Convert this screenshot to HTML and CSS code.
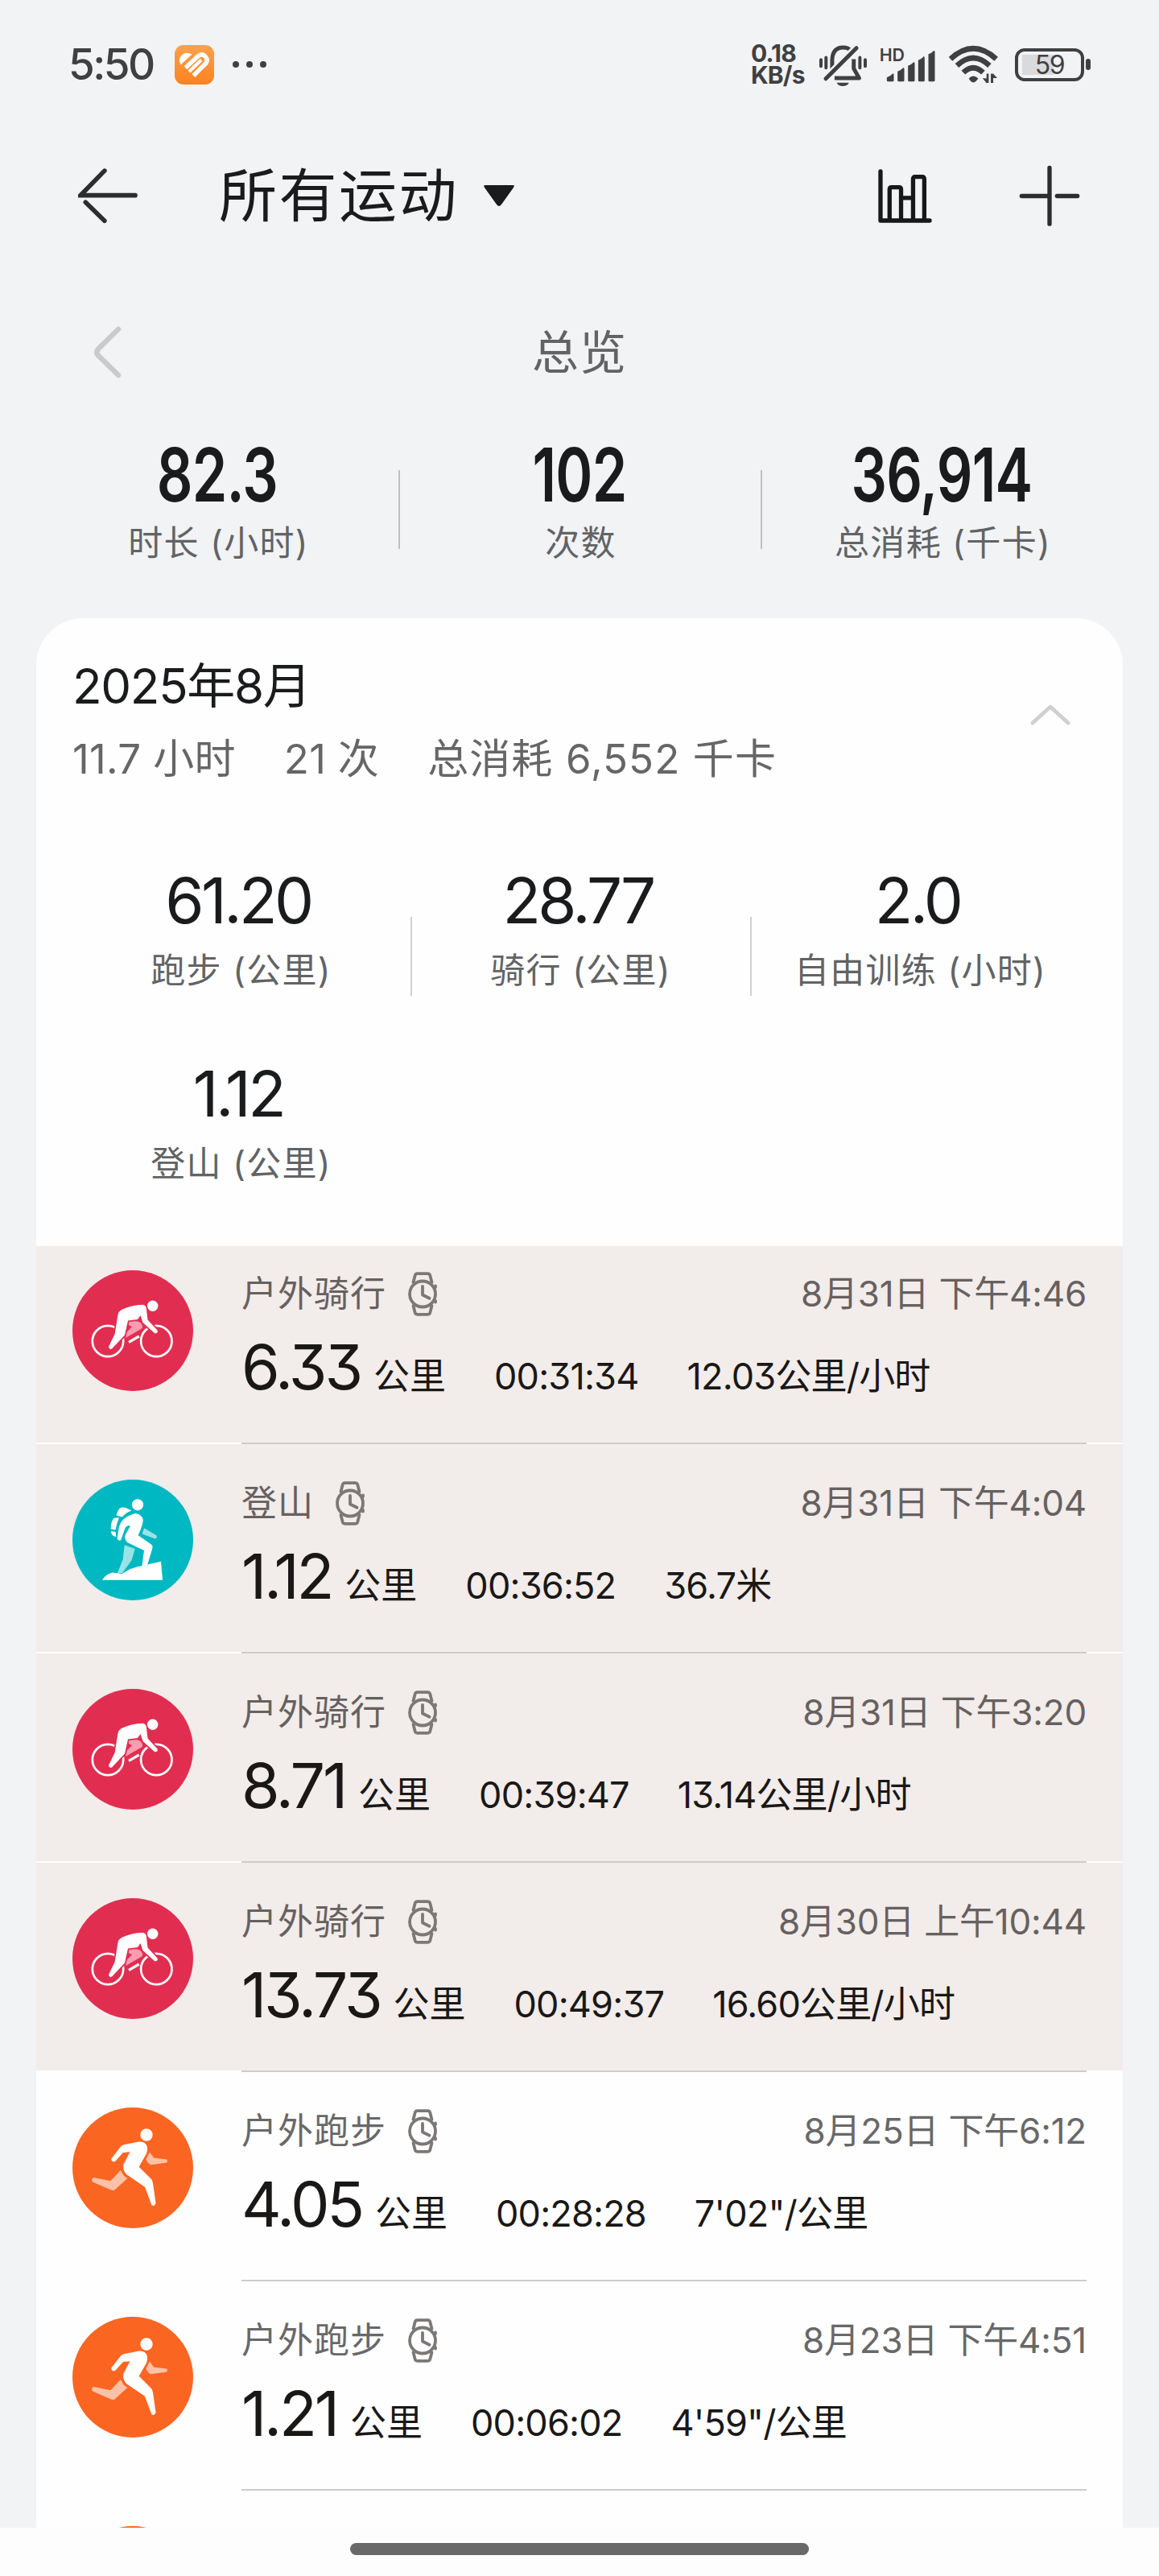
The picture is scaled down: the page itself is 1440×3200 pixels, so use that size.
FILE: index.html
```html
<!DOCTYPE html>
<html lang="zh-CN">
<head>
<meta charset="utf-8">
<title>所有运动</title>
<link rel="stylesheet" href="styles.css">
</head>
<body>
<svg class="sprite" aria-hidden="true">
  <symbol id="watch" viewBox="0 0 37 55">
    <g fill="none" stroke="currentColor" stroke-width="3.8" stroke-linecap="round" stroke-linejoin="round">
      <circle cx="18" cy="27.5" r="16"/>
      <path d="M6.5 13 8.6 4.6Q9.2 2.2 11.5 2.2H24.5Q26.8 2.2 27.4 4.6L29.5 13M6.5 42 8.6 50.4Q9.2 52.8 11.5 52.8H24.5Q26.8 52.8 27.4 50.4L29.5 42"/>
      <path d="M18 18V28.5L26.5 32.8"/>
      <path d="M34 17.5V19M34 36V37.5"/>
    </g>
  </symbol>
  <symbol id="ride" viewBox="0 0 150 150">
    <circle cx="75" cy="75" r="75" fill="#e12e50"/>
    <g fill="none" stroke="#fff" stroke-width="2.7">
      <circle cx="44" cy="88" r="19.2"/>
      <circle cx="104.3" cy="88" r="19.2"/>
    </g>
    <path d="M70 63.700Q80 62 84.500 65Q89 70 86 72.500L66 84 67.300 77 74 70.300 68.300 67Z" fill="#fb9cb1"/>
    <path d="M70 89.300 82.700 82" stroke="#fff" stroke-width="3.2" fill="none"/>
    <path d="M61 49Q73 43 87.500 42.700Q92 43.500 92 49L93.500 61.500 105.500 74.500Q107 78 102.500 78.500L87.500 65 84.500 56 81 61 69 62.500 65 80.500 49 97.500Q45.500 99 45 95L52.700 79 56.500 55Q57.500 51 61 49Z" fill="#fff" stroke="#e12e50" stroke-width="3.6" paint-order="stroke"/>
    <circle cx="99.7" cy="44.3" r="6.7" fill="#fff"/>
  </symbol>
  <symbol id="hike" viewBox="0 0 150 150">
    <circle cx="75" cy="75" r="75" fill="#00b8c1"/>
    <circle cx="81" cy="31.3" r="7.1" fill="#fff"/>
    <path d="M54.500 44.500Q57 36 59.500 35.300 63 34 66 35L73.500 38.500Q66 41 62 46.500ZM51.500 47.800 58 47.300Q55.500 53 53.500 62.500L47.700 61.500Q47.500 53 51.500 47.800ZM48 64 53.500 65 54.500 71.300Q48 70 48 64Z" fill="#fff"/>
    <path d="M89 60.300 104 69Q106.500 72 102.500 73.500L86.700 67.500ZM64.700 81.300 77.700 86 73.500 100.300 62 116H56L62.700 99Z" fill="#99e3e7"/>
    <path d="M36.700 124.700Q43 116.500 50 115.500L61.700 117Q73 109 86.700 107L110 101.800 112 124.700Z" fill="#fff"/>
    <path d="M78 42Q86 43 87.700 49.500 88.500 54 81.700 69.300L98 80.500Q100 82 99.300 85.500L92.700 107.500 86.300 108 89 88 68 78Q64 73 65.500 69L72 57.500Q67 56.500 65 61.500L60.300 75Q56.500 77 55.700 73L57.500 61Q60 46.500 78 42Z" fill="#fff"/>
  </symbol>
  <symbol id="run" viewBox="0 0 150 150">
    <circle cx="75" cy="75" r="75" fill="#fb6522"/>
    <circle cx="92" cy="34" r="7.7" fill="#fff"/>
    <path d="M96 55.500 101 62.500 117 64.500Q119 67 117 68.500L97.500 71.300Q92.500 69 91.500 64ZM59.800 78 63.500 84.500 68.300 88 53 102Q50.500 104 47.500 102.300L25 92.500Q22.500 88 26.500 87L47.300 91.300Z" fill="#fdc1a7"/>
    <path d="M60.500 48Q62 46.500 65 46L82.500 42.500Q91 41.500 93 49 93.500 55 91 59L82.700 73.700 98 89Q99.500 91 100 94L103.500 118.500Q102.500 123 98.500 121.500L90 98.700 67 83Q62 78 63.500 70.500L71.500 55.200 63 56 53 67Q48.500 68.500 48.300 63.500Z" fill="#fff"/>
  </symbol>
</svg>

<div class="screen">
  <div class="scroll">
    <header class="status">
      <span class="clock">5:50</span>
      <svg class="app-badge" viewBox="0 0 49 49">
        <defs><linearGradient id="og" x1="0" y1="0" x2="0" y2="1"><stop offset="0" stop-color="#fda04c"/><stop offset="1" stop-color="#fc8320"/></linearGradient></defs>
        <rect width="49" height="49" rx="11" fill="url(#og)"/>
        <path d="M7.500 24.500Q4 18 8 13.500Q13.500 7 21.500 11.500Z" fill="#fff"/>
        <path d="M13.500 28.300 29 13.800Q33.500 10 38 14Q42 18.500 38.500 23L23.300 38" fill="none" stroke="#fff" stroke-width="5.5"/>
        <path d="M18 33 33 18.500" fill="none" stroke="#fff" stroke-width="4.2"/>
      </svg>
      <svg class="more" viewBox="0 0 42 8" fill="#3f4042"><circle cx="4" cy="4" r="4"/><circle cx="21" cy="4" r="4"/><circle cx="38" cy="4" r="4"/></svg>
      <span class="net"><span>0.18</span><span>KB/s</span></span>
      <svg class="bell" viewBox="348 72 184 160" fill="none" stroke="#3f4042">
        <path d="M357 130V154M376 122V160M503 122V160M523 130V154" stroke-width="12" stroke-linecap="round"/>
        <path d="M399 165V128Q402 84 440 84 460 84 470 97" stroke-width="15"/>
        <path d="M480 128V163L500 199H408" stroke-width="15" stroke-linejoin="round"/>
        <path d="M375 201 490 86" stroke="#f1f3f5" stroke-width="30"/>
        <path d="M375 201 490 86" stroke-width="15" stroke-linecap="round"/>
        <path d="M416 216H462Q455 229 439 229T416 216Z" fill="#3f4042" stroke="none"/>
      </svg>
      <svg class="signal" viewBox="572 56 209 183">
        <text class="hd" x="574" y="133">HD</text>
        <path d="M601 195Q614 190 624 180 627 180 627 184V206Q627 210 622 210H606Q601 210 601 206ZM641 172Q654 168 662 159 666 159 666 163V206Q666 210 661 210H646Q641 210 641 206ZM680 151Q693 147 701 138 705 138 705 142V206Q705 210 700 210H685Q680 210 680 206ZM718 130Q731 126 738 117 742 117 742 121V206Q742 210 737 210H723Q718 210 718 206ZM756 108Q768 104 776 95 780 95 780 99V206Q780 210 775 210H761Q756 210 756 206Z" fill="#3f4042"/>
      </svg>
      <svg class="wifi" viewBox="830 80 190 146" fill="none" stroke="#3f4042">
        <path d="M839 131Q924 53 1010 131M863 156Q924 99 985 156M887 182Q924 146 961 182" stroke-width="20"/>
        <path d="M907 204Q924 186 943 204L934 215Q925 223 915 215Z" fill="#3f4042" stroke="none"/>
        <path d="M959 203 973 221H982V186H974V204ZM990 221V186H999L1014 203H999V221Z" fill="#3f4042" stroke="none"/>
      </svg>
      <span class="battery"><span class="cell">59</span><span class="tip"></span></span>
    </header>

    <nav class="topbar">
      <svg class="back" viewBox="112 534 226 210" fill="none" stroke="#2c2d2f" stroke-width="17" stroke-linecap="round"><path d="M211 546 121 638H326M140 664 211 733"/></svg>
      <h1>所有运动</h1>
      <svg class="caret" viewBox="0 0 40 28"><path d="M3 1H37Q40 1 38 4L23 25Q20 29 17 25L2 4Q0 1 3 1Z" fill="#1a1b1c"/></svg>
      <svg class="chart" viewBox="570 536 206 208" fill="none" stroke="#17181a" stroke-width="16" stroke-linecap="round" stroke-linejoin="round"><path d="M581 548V732H765M615 732V615Q615 607 623 607H650Q658 607 658 615V732M658 647H703M703 732V577Q703 568 711 568H737Q745 568 745 577V732"/></svg>
      <svg class="plus" viewBox="1098 524 228 230" fill="none" stroke="#2c2d2f" stroke-width="16"><path d="M1212 534V743" stroke-linecap="round"/><path d="M1108 639H1206M1240 639H1316" stroke-linecap="round"/></svg>
    </nav>

    <div class="period">
      <svg class="prev" viewBox="0 0 36 66" fill="none" stroke="#c9cacc" stroke-width="6.5" stroke-linecap="round"><path d="M31 4 6 28.500Q2.500 32.500 6 36.500L31 61"/></svg>
      <h2>总览</h2>
    </div>

    <section class="totals">
      <div class="total"><b>82.3</b><span>时长 (小时)</span></div>
      <div class="total"><b>102</b><span>次数</span></div>
      <div class="total"><b>36,914</b><span>总消耗 (千卡)</span></div>
    </section>

    <main class="card">
      <div class="month">
        <div class="month-text">
          <h3>2025年8月</h3>
          <p><span>11.7 小时</span><span>21 次</span><span>总消耗 6,552 千卡</span></p>
        </div>
        <svg class="fold" viewBox="0 0 50 26" fill="none" stroke="#d0d0d0" stroke-width="5" stroke-linecap="round" stroke-linejoin="round"><path d="M3 23 25 3 47 23"/></svg>
      </div>
      <div class="stats">
        <div class="stat"><b>61.20</b><span>跑步 (公里)</span></div>
        <div class="stat"><b>28.77</b><span>骑行 (公里)</span></div>
        <div class="stat"><b>2.0</b><span>自由训练 (小时)</span></div>
        <div class="stat"><b>1.12</b><span>登山 (公里)</span></div>
      </div>
      <ul class="list">
        <li class="row marked"><svg class="sport"><use href="#ride"/></svg><div class="info"><div class="line"><span>户外骑行</span><svg class="watch"><use href="#watch"/></svg><time>8月31日 下午4:46</time></div><div class="values"><b>6.33</b><i>公里</i><span>00:31:34</span><span>12.03公里/小时</span></div></div></li>
        <li class="rule"></li>
        <li class="row marked"><svg class="sport"><use href="#hike"/></svg><div class="info"><div class="line"><span>登山</span><svg class="watch"><use href="#watch"/></svg><time>8月31日 下午4:04</time></div><div class="values"><b>1.12</b><i>公里</i><span>00:36:52</span><span>36.7米</span></div></div></li>
        <li class="rule"></li>
        <li class="row marked"><svg class="sport"><use href="#ride"/></svg><div class="info"><div class="line"><span>户外骑行</span><svg class="watch"><use href="#watch"/></svg><time>8月31日 下午3:20</time></div><div class="values"><b>8.71</b><i>公里</i><span>00:39:47</span><span>13.14公里/小时</span></div></div></li>
        <li class="rule"></li>
        <li class="row marked"><svg class="sport"><use href="#ride"/></svg><div class="info"><div class="line"><span>户外骑行</span><svg class="watch"><use href="#watch"/></svg><time>8月30日 上午10:44</time></div><div class="values"><b>13.73</b><i>公里</i><span>00:49:37</span><span>16.60公里/小时</span></div></div></li>
        <li class="rule"></li>
        <li class="row"><svg class="sport"><use href="#run"/></svg><div class="info"><div class="line"><span>户外跑步</span><svg class="watch"><use href="#watch"/></svg><time>8月25日 下午6:12</time></div><div class="values"><b>4.05</b><i>公里</i><span>00:28:28</span><span>7'02"/公里</span></div></div></li>
        <li class="rule"></li>
        <li class="row"><svg class="sport"><use href="#run"/></svg><div class="info"><div class="line"><span>户外跑步</span><svg class="watch"><use href="#watch"/></svg><time>8月23日 下午4:51</time></div><div class="values"><b>1.21</b><i>公里</i><span>00:06:02</span><span>4'59"/公里</span></div></div></li>
        <li class="rule"></li>
        <li class="row"><svg class="sport"><use href="#run"/></svg></li>
      </ul>
    </main>
  </div>
  <footer class="home"><span class="pill"></span></footer>
</div>
</body>
</html>
```
FILE: styles.css
```css
* { box-sizing: border-box; }

body {
  margin: 0;
  background: #fdfdfd;
  color: #1a1b1c;
  font-family: Inter, "Noto Sans CJK SC", sans-serif;
}

h1, h2, h3, p, ul { margin: 0; padding: 0; font-weight: 400; }
ul { list-style: none; }
b, i { font-weight: 400; font-style: normal; }
svg { display: block; flex: none; }
.sprite { display: none; }

.screen { width: 1440px; height: 3200px; display: flex; flex-direction: column; overflow: hidden; }
.scroll { height: 3140px; flex: none; overflow: hidden; background: #f1f3f5; }

/* status bar */
.status { height: 160px; display: flex; align-items: center; padding: 0 85px 0 85px; color: #3f4042; }
.clock { width: 132px; font-size: 53px; font-weight: 500; line-height: 60px; letter-spacing: -2.5px; white-space: nowrap; }
.app-badge { width: 49px; height: 49px; margin-right: 23px; }
.more { width: 42px; height: 8px; }
.net { width: 84px; margin-left: auto; display: flex; flex-direction: column; font-size: 30px; font-weight: 700; line-height: 27px; letter-spacing: -0.8px; }
.bell { width: 61px; height: 53px; margin: 2px 14px 0 0; }
.signal { width: 70px; height: 61px; margin-right: 16px; }
.hd { font-size: 64px; font-weight: 600; fill: #3f4042; letter-spacing: -1px; }
.wifi { width: 63px; height: 49px; margin-right: 20px; }
.battery { display: flex; align-items: center; gap: 2px; }
.cell { width: 86px; height: 41px; border: 4px solid #3f4042; border-radius: 12px; background: linear-gradient(90deg, #d9dadc 57%, transparent 57%) 5px 4px / 68px 25px no-repeat; font-size: 32px; line-height: 33px; text-align: center; letter-spacing: -1.5px; }
.tip { width: 6px; height: 14px; border-radius: 3px; background: #3f4042; }

/* title bar */
.topbar { height: 166px; display: flex; align-items: center; padding: 0 98px 0 97px; }
.back { width: 75px; height: 70px; }
h1 { margin-left: 100px; font-size: 72px; line-height: 90px; letter-spacing: 2.5px; }
.caret { width: 40px; height: 28px; margin-left: 30px; }
.chart { width: 69px; height: 69px; margin-left: auto; margin-right: 107px; }
.plus { width: 76px; height: 77px; }

/* period switcher */
.period { height: 222px; display: grid; grid-template-columns: 1fr auto 1fr; align-items: center; padding: 2px 116px 0; }
.prev { width: 36px; height: 66px; }
h2 { font-size: 58px; line-height: 80px; letter-spacing: 1px; color: #626365; }

.totals { display: grid; grid-template-columns: repeat(3, 450px); margin: 0 45px 52px; }
.total, .stat { position: relative; display: flex; flex-direction: column; align-items: center; line-height: 84px; white-space: nowrap; }
.total b { font-size: 92px; font-weight: 600; transform: scaleX(0.76); letter-spacing: -1px; }
.total span, .stat span { padding-left: 3px; font-size: 43px; letter-spacing: 1.3px; color: #626365; }
.total + .total::before { content: ""; position: absolute; left: 0; top: 36px; width: 2px; height: 98px; background: #bfc0c2; }

/* month card */
.card { margin: 0 45px; padding-top: 44px; background: #fefefe; border-radius: 58px 58px 0 0; }
.month { display: flex; justify-content: space-between; align-items: flex-start; padding: 0 65px 0 45px; }
h3 { font-size: 60px; line-height: 81px; letter-spacing: -1.3px; }
.month p { display: flex; gap: 60px; margin-top: 20px; font-size: 51px; line-height: 60px; letter-spacing: 0.3px; color: #666; white-space: nowrap; }
.month p span:last-child { letter-spacing: 1.1px; }
.fold { width: 50px; height: 26px; margin-top: 63px; }
.stats { display: grid; grid-template-columns: repeat(3, 422px); justify-content: center; row-gap: 68px; padding: 102px 0 61px; }
.stat b { margin-left: -4px; font-size: 78px; line-height: 88px; letter-spacing: -3.6px; }
.stat:nth-child(2)::before, .stat:nth-child(3)::before { content: ""; position: absolute; left: 1px; top: 64px; width: 2px; height: 98px; background: #d0d0d0; }

/* workout rows */
.row { height: 258px; display: flex; gap: 60px; padding: 44px 45px 0; }
.row:first-child { height: 244px; padding-top: 30px; }
.marked { background: #f2ecea; }
.rule { height: 2px; margin: 0 45px 0 255px; background: #d0cbca; }
.sport { width: 150px; height: 150px; }
.info { flex: 1; padding-top: 4px; }
.line { display: flex; align-items: center; height: 51px; font-size: 44px; letter-spacing: 1px; line-height: 48px; color: #666160; white-space: nowrap; }
.line span, .line time { padding-bottom: 1px; }
.watch { width: 37px; height: 55px; margin-left: 27px; color: #7d7877; }
.line time { margin-left: auto; letter-spacing: -0.2px; }
.row:not(.marked) .line { color: #686868; }
.values { display: flex; align-items: baseline; margin-top: 25px; font-size: 45px; line-height: 80px; white-space: nowrap; color: #1a1817; }
.values b { font-size: 77px; letter-spacing: -3.2px; font-feature-settings: "cv09"; }
.values i { margin-left: 16px; }
.values span { margin-left: 60px; letter-spacing: -0.8px; font-feature-settings: "cv09"; }

/* gesture bar */
.home { flex: 1; display: flex; justify-content: center; padding-top: 19px; background: #fdfdfd; }
.pill { width: 570px; height: 15px; border-radius: 8px; background: #696969; }
```
